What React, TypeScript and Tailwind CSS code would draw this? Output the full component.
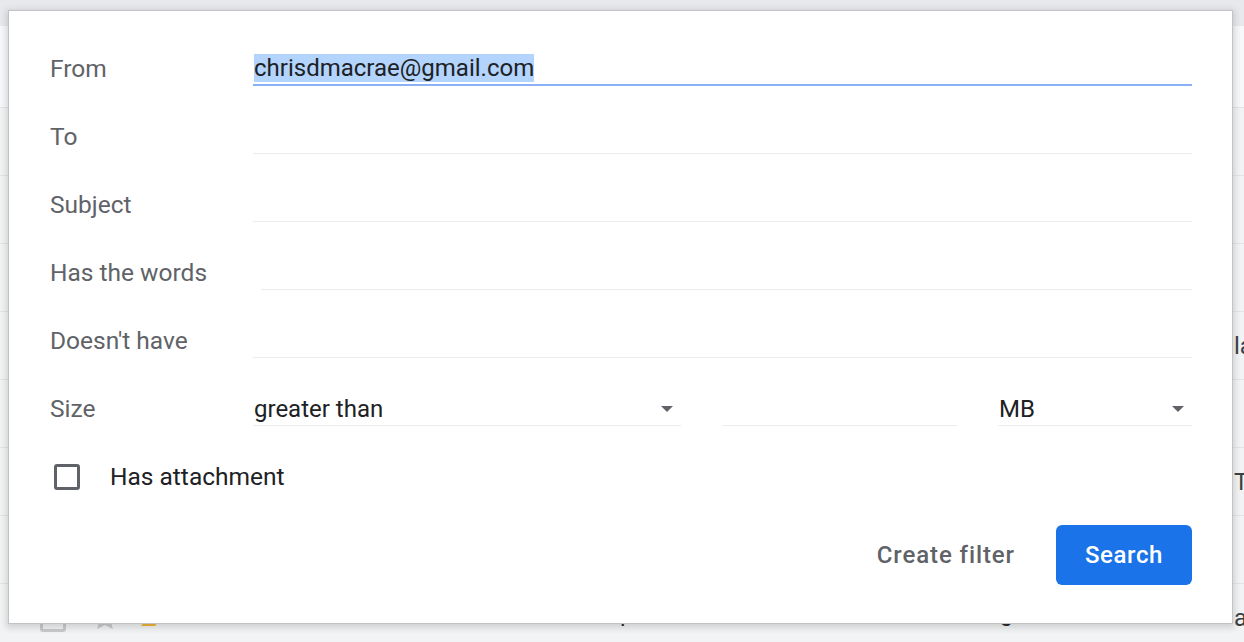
import type { ReactNode } from "react";

const FIELDS = [
  { label: "From", value: "chrisdmacrae@gmail.com", active: true },
  { label: "To" },
  { label: "Subject" },
  { label: "Has the words", indent: true },
  { label: "Doesn't have" },
];

// rows of the inbox behind the dialog; only the right edge and the last row peek out
const INBOX_ROWS = [
  { tail: "" },
  { tail: "" },
  { tail: "" },
  { tail: "la" },
  { tail: "" },
  { tail: "T" },
  { tail: "" },
  { tail: "a", sender: "Chris, me", subject: "Re: quick note about the new site, looking forward" },
];

function Caret() {
  return (
    <svg width="12" height="6" viewBox="0 0 12 6" aria-hidden>
      <polygon points="0,0 12,0 6,6" fill="#5f6368" />
    </svg>
  );
}

function FieldRow({ label, children }: { label: string; children: ReactNode }) {
  return (
    <div className="flex h-[68px] items-end">
      <div className="flex h-[34px] w-[203px] shrink-0 items-center text-[24.5px] text-[#5f6368]">{label}</div>
      {children}
    </div>
  );
}

function InboxRow({ sender, subject, tail }: { sender?: string; subject?: string; tail: string }) {
  return (
    <div className="flex h-[68px] items-center overflow-hidden border-b border-[#e3e4e6] bg-[#f2f3f4]">
      <div className="flex w-[1234px] shrink-0 items-center">
        <span className="ml-[40px] h-[28px] w-[26px] rounded-[3px] border-[3px] border-[#c9cacc]" />
        <svg className="ml-[27px]" width="24" height="24" viewBox="0 0 24 24" aria-hidden>
          <path
            d="M12 2.5l2.9 6.3 6.8.7-5.1 4.6 1.5 6.7L12 17.4l-6.1 3.4 1.5-6.7-5.1-4.6 6.8-.7z"
            fill="none"
            stroke="#c9cacc"
            strokeWidth="2.4"
          />
        </svg>
        <svg className="ml-[24px]" width="22" height="20" viewBox="0 0 22 20" aria-hidden>
          <path d="M0 2h14l6 8-6 8H0l6-8z" fill="#f2b32c" />
        </svg>
        {sender ? <span className="mb-[10px] ml-[80px] text-[#202124]">{sender}</span> : null}
        {subject ? <span className="mb-[10px] ml-[230px] text-[#202124]">{subject}</span> : null}
      </div>
      <span className="whitespace-nowrap text-[#3c4043]">{tail}</span>
    </div>
  );
}

export default function App() {
  return (
    <div className="relative h-[642px] w-[1244px] overflow-hidden bg-[#f2f3f4] font-[Roboto,sans-serif] text-[24px] leading-[28px]">
      <div className="h-[26px] bg-[#e8e9ec]" />
      <div className="h-[82px] border-b border-[#e3e4e6] bg-[#f7f8f9]" />
      {INBOX_ROWS.map((row, index) => (
        <InboxRow key={index} {...row} />
      ))}

      <div className="absolute left-[8px] top-[10px] flex h-[614px] w-[1225px] flex-col border border-[#c2c3c5] bg-white pb-[38px] pl-[41px] pr-[40px] pt-[7px] shadow-[0_2px_6px_2px_rgba(60,64,67,0.18)]">
        {FIELDS.map((field) => (
          <FieldRow key={field.label} label={field.label}>
            <div
              className={`flex h-[34px] flex-1 items-center ${
                field.active ? "border-b-2 border-[#8ab1f5]" : "border-b border-[#ebedef]"
              } ${field.indent ? "ml-[8px]" : ""}`}
            >
              {field.value ? (
                <span className="ml-px bg-[#b3d4fc] text-[#202124]">{field.value}</span>
              ) : null}
            </div>
          </FieldRow>
        ))}

        <FieldRow label="Size">
          <div className="flex h-[34px] w-[428px] items-center justify-between border-b border-[#ebedef] pl-px pr-[8px] text-[#202124]">
            <span>greater than</span>
            <Caret />
          </div>
          <div className="ml-[41px] h-[34px] w-[235px] border-b border-[#ebedef]" />
          <div className="ml-[41px] flex h-[34px] flex-1 items-center justify-between border-b border-[#ebedef] pl-px pr-[8px] text-[#202124]">
            <span>MB</span>
            <Caret />
          </div>
        </FieldRow>

        <label className="mt-[38px] flex h-[26px] items-center">
          <span className="ml-[4px] h-[26px] w-[26px] rounded-[3px] border-[3px] border-[#5f6368]" />
          <span className="ml-[30px] text-[24.5px] text-[#202124]">Has attachment</span>
        </label>

        <div className="mt-auto flex items-center justify-end">
          <button className="font-medium tracking-[0.9px] text-[#5f6368]">Create filter</button>
          <button className="ml-[41px] h-[60px] w-[136px] rounded-[6px] bg-[#1a73e8] font-medium tracking-[0.6px] text-white">
            Search
          </button>
        </div>
      </div>
    </div>
  );
}
